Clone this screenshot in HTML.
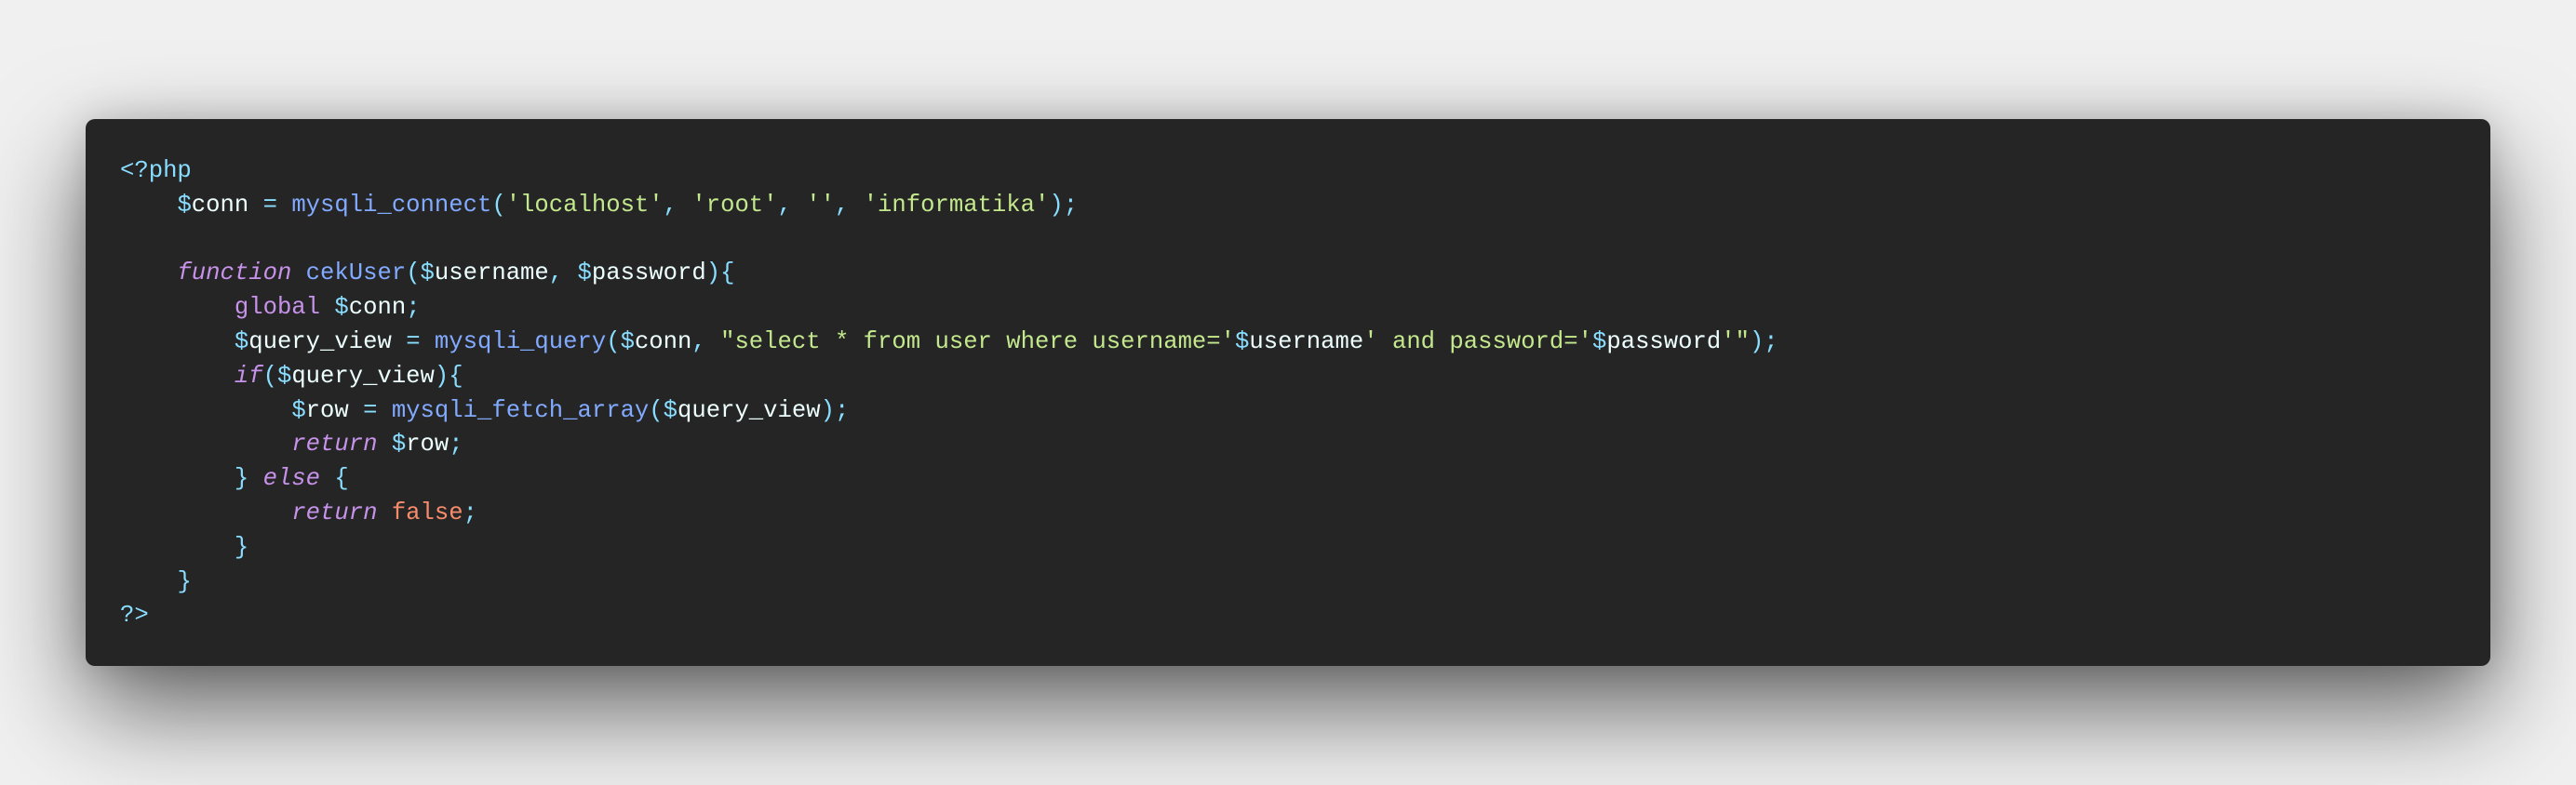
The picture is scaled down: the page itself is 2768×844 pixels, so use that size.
<!DOCTYPE html>
<html><head><meta charset="utf-8"><style>
html,body{margin:0;padding:0;}
body{width:2768px;height:844px;background:#f0f0f0;position:relative;overflow:hidden;}
.card{position:absolute;left:92px;top:128px;width:2584px;height:588px;background:#252525;border-radius:10px;box-shadow:0 45px 110px rgba(0,0,0,.6),0 0 40px rgba(0,0,0,.15);}
pre{margin:0;position:absolute;left:37px;top:38px;font-family:"Liberation Mono",monospace;font-size:25.6px;line-height:36.8px;color:#eeffff;}
.p{color:#89ddff}.f{color:#82aaff}.s{color:#c3e88d}.k{color:#c792ea;font-style:italic}.g{color:#c792ea}.b{color:#f78c6c}
</style></head><body>
<div class="card"><pre><span class="p">&lt;?php</span>
    <span class="p">$</span>conn <span class="p">=</span> <span class="f">mysqli_connect</span><span class="p">(</span><span class="s">'localhost'</span><span class="p">,</span> <span class="s">'root'</span><span class="p">,</span> <span class="s">''</span><span class="p">,</span> <span class="s">'informatika'</span><span class="p">);</span>

    <span class="k">function</span> <span class="f">cekUser</span><span class="p">($</span>username<span class="p">,</span> <span class="p">$</span>password<span class="p">){</span>
        <span class="g">global</span> <span class="p">$</span>conn<span class="p">;</span>
        <span class="p">$</span>query_view <span class="p">=</span> <span class="f">mysqli_query</span><span class="p">($</span>conn<span class="p">,</span> <span class="s">"select * from user where username='</span><span class="p">$</span>username<span class="s">' and password='</span><span class="p">$</span>password<span class="s">'"</span><span class="p">);</span>
        <span class="k">if</span><span class="p">($</span>query_view<span class="p">){</span>
            <span class="p">$</span>row <span class="p">=</span> <span class="f">mysqli_fetch_array</span><span class="p">($</span>query_view<span class="p">);</span>
            <span class="k">return</span> <span class="p">$</span>row<span class="p">;</span>
        <span class="p">}</span> <span class="k">else</span> <span class="p">{</span>
            <span class="k">return</span> <span class="b">false</span><span class="p">;</span>
        <span class="p">}</span>
    <span class="p">}</span>
<span class="p">?&gt;</span></pre></div>
</body></html>
